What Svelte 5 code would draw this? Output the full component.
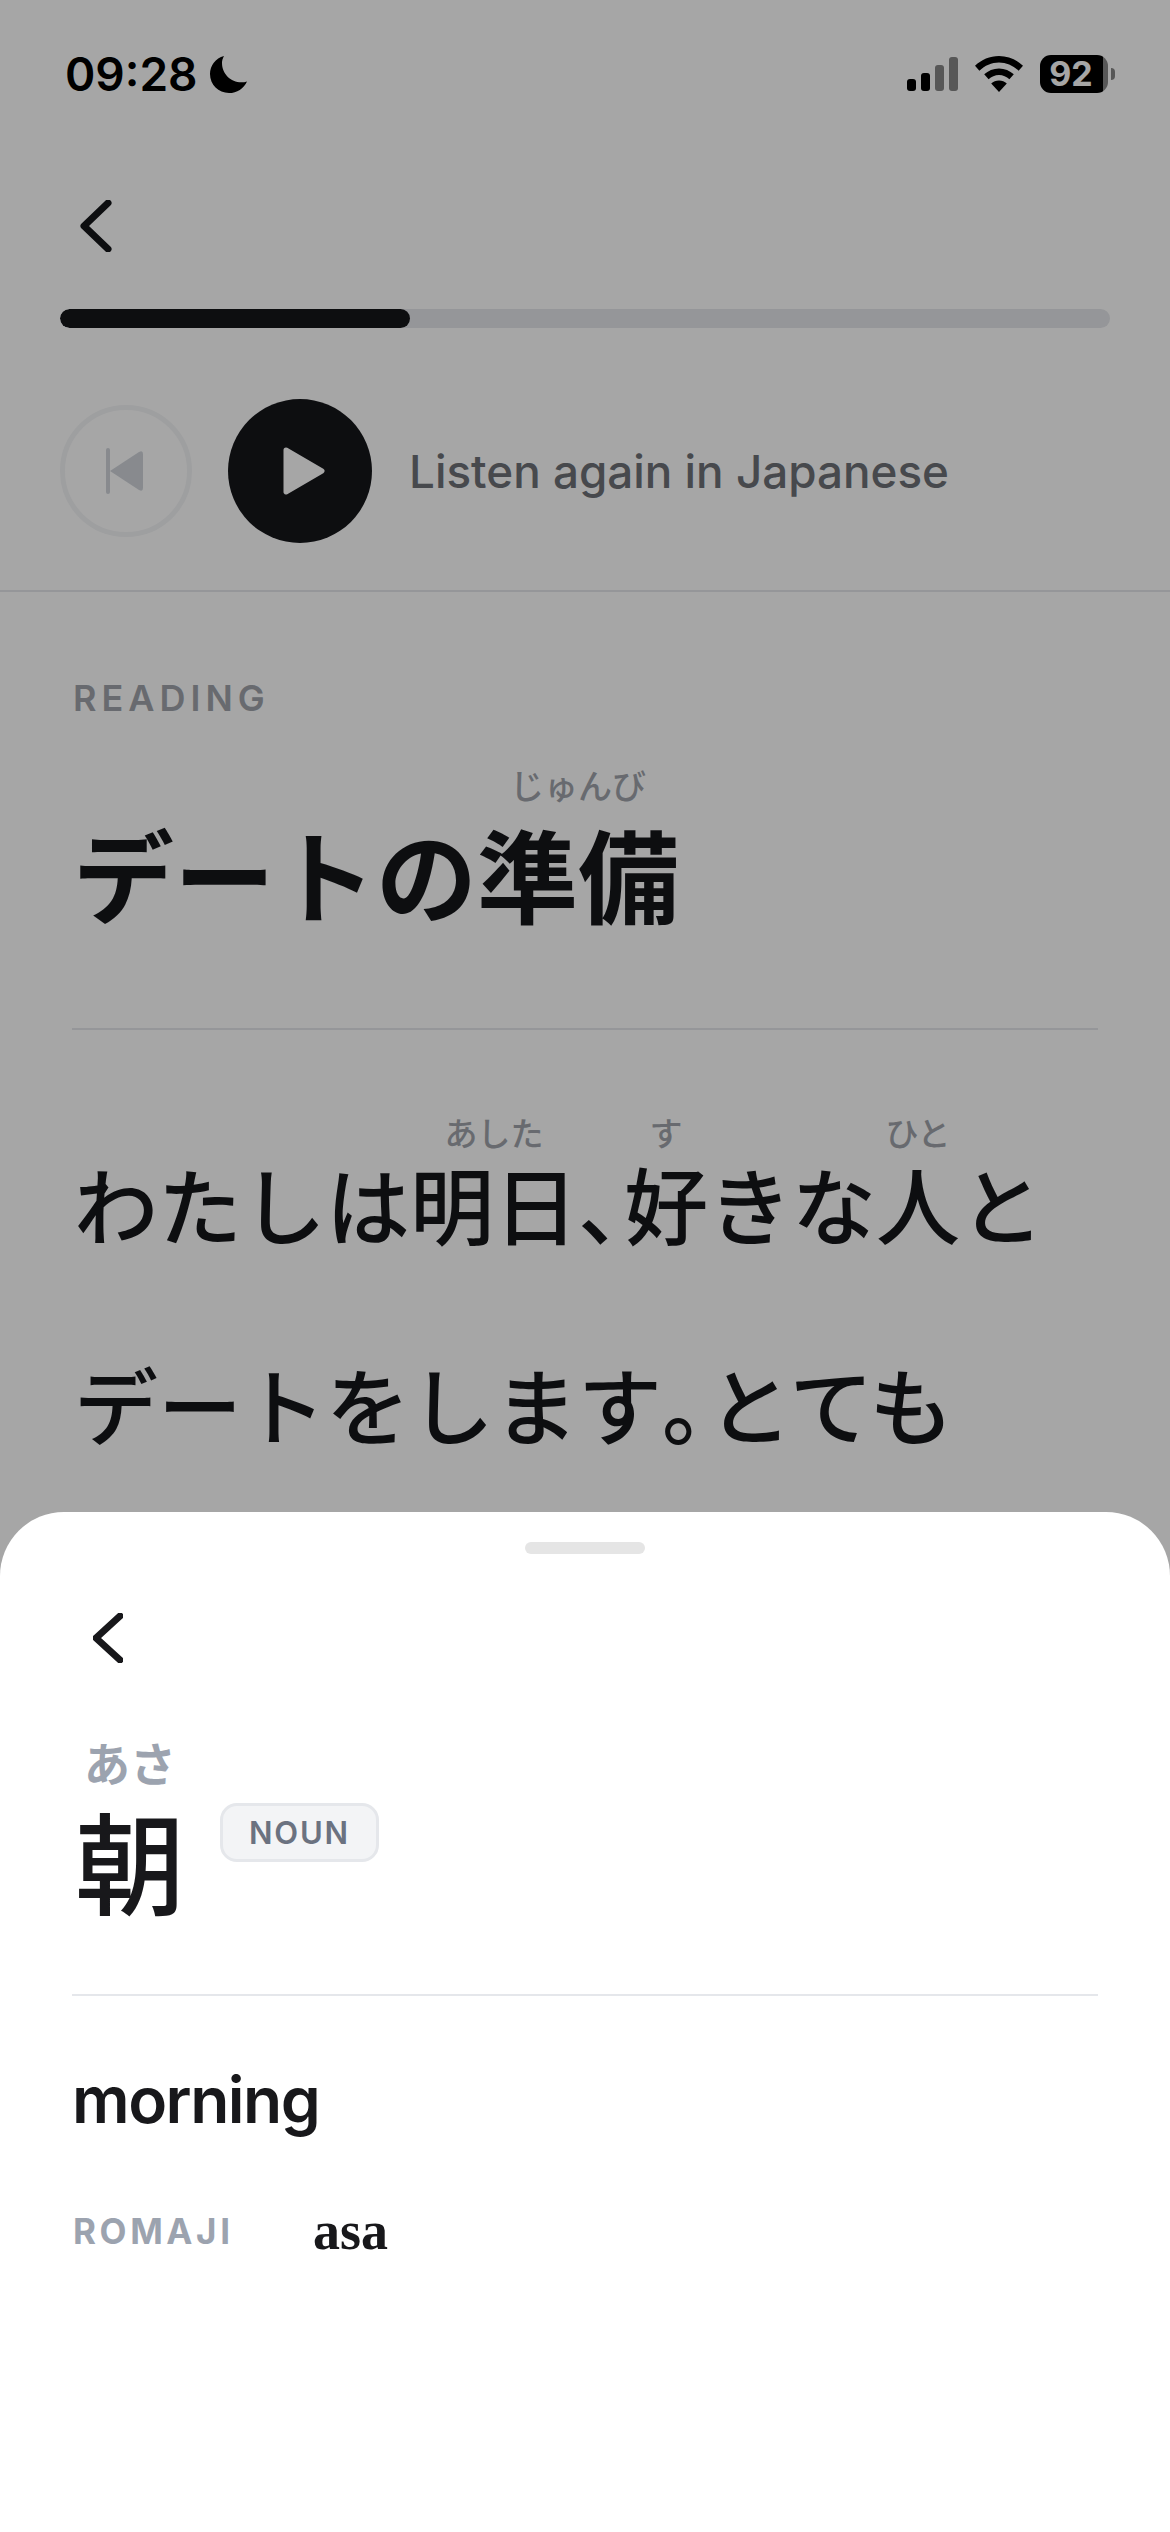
<script>
	let progress = 33.3;
</script>

<div class="page">
	<div class="status">
		<div class="clock">
			<span class="time">09:28</span>
			<svg class="moon" width="37" height="38" viewBox="0 0 37 38"><path d="M14 1C5.5 3.2 0 10.5 0 19c0 10.5 8.5 19 19 19 8 0 14.8-4.6 18-11.6-1.8.6-3.7.9-5.6.9C20.6 27.3 12 18.7 12 8c0-2.5.7-4.8 2-7z" fill="#000"/></svg>
		</div>
		<div class="indicators">
			<svg width="51" height="34" viewBox="0 0 51 34">
				<rect x="0" y="22" width="9" height="12" rx="3" fill="#000"/>
				<rect x="14" y="16" width="9" height="18" rx="3" fill="#000"/>
				<rect x="28" y="8" width="9" height="26" rx="3" fill="#868686"/>
				<rect x="42" y="0" width="9" height="34" rx="3" fill="#868686"/>
			</svg>
			<svg width="48" height="36" viewBox="0 0 48 36">
				<path d="M24 0C14.8 0 6.6 3.6 0 9.8l4.4 5C9.8 9.7 16.6 6.6 24 6.6s14.200 3.100 19.600 8.200l4.400-5C41.400 3.600 33.200 0 24 0z" fill="#000"/>
				<path d="M24 12.400c-5.700 0-10.800 2.200-14.800 5.900l4.400 5c2.800-2.500 6.400-4.200 10.400-4.200s7.600 1.700 10.400 4.200l4.400-5c-4-3.700-9.100-5.900-14.800-5.900z" fill="#000"/>
				<path d="M24 24.600c-3 0-5.700 1.100-7.800 3L24 36l7.800-8.400c-2.100-1.900-4.800-3-7.800-3z" fill="#000"/>
			</svg>
			<div class="battery">
				<div class="cell"><span>92</span></div>
				<div class="nub"></div>
			</div>
		</div>
	</div>

	<div class="nav">
		<svg width="32" height="52" viewBox="0 0 32 52"><path d="M28 3L4 26l24 23" fill="none" stroke="#15161a" stroke-width="7" stroke-linecap="round" stroke-linejoin="round"/></svg>
	</div>

	<div class="track"><div class="fill" style="width: {progress}%"></div></div>

	<div class="player">
		<button class="skip" aria-label="Restart">
			<svg width="38" height="46" viewBox="0 0 38 46">
				<rect x="0" y="0" width="4" height="46" rx="2" fill="#d1d5db"/>
				<path d="M4 23L33 4q4-2 4 2v34q0 4-4 2z" fill="#d1d5db"/>
			</svg>
		</button>
		<button class="play" aria-label="Play">
			<svg width="42" height="48" viewBox="0 0 42 48"><path d="M3 3L39 24L3 45z" fill="#fff" stroke="#fff" stroke-width="5" stroke-linejoin="round"/></svg>
		</button>
		<span class="listen">Listen again in Japanese</span>
	</div>

	<section class="reading">
		<div class="label">READING</div>
		<h1 lang="ja">デートの<ruby>準備<rt>じゅんび</rt></ruby></h1>
		<hr />
		<p lang="ja">わたしは<ruby>明日<rt class="raised">あした</rt></ruby><span class="punct">、</span><ruby>好<rt class="raised">す</rt></ruby>きな<ruby>人<rt class="raised">ひと</rt></ruby>とデートをします<span class="punct">。</span>とても</p>
	</section>

	<div class="overlay"></div>

	<div class="sheet">
		<div class="handle"></div>
		<div class="sheet-back">
			<svg width="30" height="50" viewBox="0 0 30 50"><path d="M27 3L3 25l24 22" fill="none" stroke="#18181b" stroke-width="7" stroke-linecap="round" stroke-linejoin="round"/></svg>
		</div>
		<div class="word">
			<ruby lang="ja">朝<rt>あさ</rt></ruby>
			<span class="badge">NOUN</span>
		</div>
		<hr />
		<div class="meaning">morning</div>
		<div class="romaji">
			<span class="romaji-label">ROMAJI</span>
			<span class="romaji-value">asa</span>
		</div>
	</div>
</div>

<style>
	:global(body) {
		margin: 0;
		background: #fff;
	}
	.page {
		position: relative;
		width: 1170px;
		height: 2532px;
		overflow: hidden;
		background: #fff;
		color: #15161a;
		font-family: Inter, "Noto Sans CJK JP", sans-serif;
	}
	.status {
		display: flex;
		justify-content: space-between;
		align-items: center;
		height: 38px;
		padding: 55px 55px 0 65px;
	}
	.clock {
		display: flex;
		align-items: center;
		gap: 12px;
	}
	.time {
		font-size: 46px;
		font-weight: 600;
		line-height: 38px;
		color: #000;
	}
	.indicators {
		display: flex;
		align-items: center;
		gap: 17px;
	}
	.battery {
		display: flex;
		align-items: center;
		gap: 3px;
	}
	.cell {
		width: 68px;
		height: 38px;
		border-radius: 11px;
		background: linear-gradient(to right, #000 63px, #868686 63px);
		display: flex;
		align-items: center;
		justify-content: center;
		padding-right: 6px;
		box-sizing: border-box;
	}
	.cell span {
		font-size: 34px;
		font-weight: 700;
		color: #fff;
		line-height: 1;
	}
	.nub {
		width: 4px;
		height: 12px;
		border-radius: 0 4px 4px 0;
		background: #868686;
	}
	.nav {
		display: flex;
		padding: 107px 0 0 80px;
		height: 52px;
	}
	.track {
		margin: 57px 60px 0;
		height: 19px;
		border-radius: 10px;
		background: #e5e7eb;
		overflow: hidden;
	}
	.fill {
		height: 100%;
		border-radius: 10px;
		background: #15161a;
	}
	.player {
		display: flex;
		align-items: center;
		padding: 71px 60px 47px;
		border-bottom: 2px solid #e5e7eb;
	}
	button {
		padding: 0;
		display: flex;
		align-items: center;
		justify-content: center;
		border-radius: 50%;
		box-sizing: border-box;
		flex-shrink: 0;
	}
	.skip {
		width: 132px;
		height: 132px;
		background: none;
		border: 5px solid #f3f4f6;
		padding-right: 2px;
	}
	.play {
		width: 144px;
		height: 144px;
		margin-left: 36px;
		background: #15161a;
		border: 0;
		padding-left: 7px;
	}
	.listen {
		margin-left: 37px;
		font-size: 45.8px;
		font-weight: 500;
		color: #6e7177;
	}
	.reading {
		padding: 91px 72px 0;
	}
	.label {
		font-size: 36px;
		font-weight: 600;
		line-height: 30px;
		letter-spacing: 5px;
		color: #a0a4ab;
		padding-left: 1px;
	}
	h1 {
		margin: 0;
		padding: 106px 0 0 1px;
		font-size: 101px;
		font-weight: 700;
		line-height: 120px;
	}
	rt {
		font-size: 34px;
		font-weight: 500;
		line-height: 1;
		color: #a0a4ab;
		ruby-align: center;
		position: relative;
		top: -23px;
	}
	.raised {
		font-size: 33px;
		top: -15px;
	}
	hr {
		margin: 0;
		border: 0;
		height: 2px;
		background: #e5e7eb;
	}
	.reading hr {
		margin-top: 89px;
	}
	.reading p {
		margin: 79px 0 0;
		padding-left: 2px;
		font-size: 84px;
		font-weight: 500;
		line-height: 200px;
	}
	.punct {
		letter-spacing: -38px;
	}
	.overlay {
		position: absolute;
		inset: 0;
		background: rgba(0, 0, 0, 0.35);
	}
	.sheet {
		position: absolute;
		left: 0;
		right: 0;
		bottom: 0;
		height: 1020px;
		padding: 30px 72px 0;
		box-sizing: border-box;
		border-radius: 64px 64px 0 0;
		background: #fff;
		color: #18181b;
	}
	.handle {
		width: 120px;
		height: 12px;
		margin: 0 auto;
		border-radius: 6px;
		background: #e5e5e5;
	}
	.sheet-back {
		display: flex;
		padding: 59px 0 0 21px;
	}
	.word {
		display: flex;
		align-items: flex-start;
		gap: 35px;
		padding: 100px 0 0 3px;
		font-size: 110px;
		font-weight: 500;
		line-height: 130px;
	}
	.word rt {
		font-size: 46px;
		font-weight: 600;
		color: #9ca3af;
	}
	.badge {
		margin-top: 40px;
		padding: 0 26px;
		height: 59px;
		box-sizing: border-box;
		display: flex;
		align-items: center;
		border: 3px solid #e5e7eb;
		border-radius: 17px;
		background: #f3f4f6;
		font-size: 31px;
		font-weight: 600;
		line-height: 1;
		letter-spacing: 1.8px;
		color: #6b7280;
	}
	.sheet hr {
		margin-top: 62px;
	}
	.meaning {
		margin-top: 64px;
		font-size: 64px;
		font-weight: 600;
		line-height: 80px;
		letter-spacing: -1.5px;
	}
	.romaji {
		display: flex;
		align-items: center;
		margin-top: 60px;
		padding-left: 1px;
	}
	.romaji-label {
		width: 240px;
		font-size: 35px;
		font-weight: 700;
		letter-spacing: 3.6px;
		color: #9ca3af;
	}
	.romaji-value {
		font-family: "Liberation Serif", serif;
		font-size: 54px;
		font-weight: 700;
	}
</style>
